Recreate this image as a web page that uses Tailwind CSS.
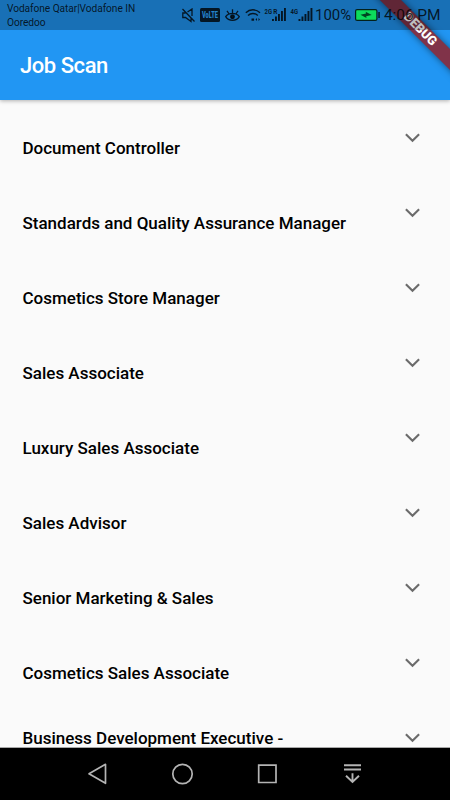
<!DOCTYPE html>
<html lang="en">
<head>
  <meta charset="UTF-8">
  <meta name="viewport" content="width=device-width, initial-scale=1.0">
  <title>Job Scan</title>
  <script src="https://cdn.jsdelivr.net/npm/@tailwindcss/browser@4"></script>
</head>
<body class="bg-[#fafafa] font-['Roboto',sans-serif]">
  <div class="relative flex flex-col w-[450px] h-[800px] overflow-hidden">

    <!-- App bar, the status bar lies over its top part -->
    <header class="relative z-10 shrink-0 h-[100px] pt-[30px] bg-[#2196f3] shadow-[0_1px_4px_rgba(0,0,0,0.3)]">
      <h1 class="h-[70px] pl-5 flex items-center text-[22px] font-medium text-white tracking-[-0.45px]">Job Scan</h1>
    </header>

    <!-- Debug ribbon -->
    <div class="absolute z-20 left-[345px] top-[22px] w-[150px] h-[15px] rotate-45 flex items-center justify-center bg-[#803349] shadow-[0_0_7px_rgba(0,0,0,0.5)] text-[12.75px] leading-none font-black text-white">DEBUG</div>

    <!-- Status bar -->
    <div class="absolute z-30 inset-x-0 top-0 h-[30px] pl-[7px] flex items-start bg-black/25 text-black/80">
      <div class="w-[174px] pt-[2px] text-[10.2px] leading-[13.5px] tracking-[-0.07px] whitespace-nowrap">Vodafone Qatar|Vodafone IN<br>Ooredoo</div>
      <!-- muted -->
      <svg class="mt-2 w-[15px] h-[15px] shrink-0" viewBox="0 0 15 15" fill="none" stroke="currentColor" stroke-width="1.300">
        <path d="M1.500 1l12 12.500M4.500 5H1.800v4.500h2.700l5.500 4V10.500M6.500 4L11 1V8"/>
      </svg>
      <!-- volte -->
      <svg class="mt-2 ml-1 w-[20px] h-[14px] shrink-0" viewBox="0 0 20 14">
        <rect width="20" height="14" rx="1.500" fill="currentColor"/>
        <text x="2" y="10.300" font-size="8.500" font-weight="900" textLength="16" lengthAdjust="spacingAndGlyphs" fill="#2583cc">VoLTE</text>
      </svg>
      <!-- eye -->
      <svg class="mt-2 ml-[5px] w-[15px] h-[15px] shrink-0" viewBox="0 0 15 15" fill="none" stroke="currentColor" stroke-width="1.300">
        <path d="M.7 8.700C3.500 4.200 11.500 4.200 14.300 8.700C11.500 13.500 3.500 13.500.7 8.700zM7.500 5V1.200M3.800 5.500L2 2.800M11.200 5.500L13 2.800"/>
        <circle cx="7.500" cy="8.700" r="1.800" fill="currentColor"/>
      </svg>
      <!-- wifi -->
      <svg class="mt-2 ml-[5px] w-[17px] h-[14px] shrink-0" viewBox="0 0 17 14" fill="none" stroke="currentColor" stroke-width="1.400">
        <path d="M.8 4.700C4.800 .8 11 .8 15 4.700M3 7.500C5.800 4.800 10 4.800 12.800 7.500"/>
        <path d="M6.500 10.500h2.600v2.300H6.500zM12 10v3l-1.500-1.500zM13.500 10v3l1.500-1.500z" fill="currentColor" stroke="none"/>
      </svg>
      <!-- signals -->
      <svg class="mt-2 ml-[2px] w-[23px] h-[14px] shrink-0 overflow-visible" viewBox="0 0 23 14" fill="currentColor">
        <text x="0.500" y="6.300" font-size="8" font-weight="700" textLength="7.500" lengthAdjust="spacingAndGlyphs">2G</text>
        <text x="9.300" y="5.500" font-size="6.500" font-weight="700">R</text>
        <path d="M8 11h1.900v2H8zM11 8.500h1.900V13H11zM14 6h1.900v7H14zM17 3h1.900v10H17zM20 0h1.900v13H20z"/>
      </svg>
      <svg class="mt-2 ml-[3px] w-[24px] h-[14px] shrink-0 overflow-visible" viewBox="0 0 24 14" fill="currentColor">
        <text x="0.500" y="6.300" font-size="8" font-weight="700" textLength="7.500" lengthAdjust="spacingAndGlyphs">4G</text>
        <path d="M8.500 11h1.900v2H8.500zM11.500 8.500h1.900V13h-1.900zM14.500 6h1.900v7h-1.900zM17.500 3h1.900v10h-1.900zM20.500 0h1.900v13h-1.900z"/>
      </svg>
      <div class="w-[41px] pt-[6px] pl-[1px] text-[15px] leading-[18px]">100%</div>
      <!-- battery -->
      <svg class="mt-[9px] w-[26px] h-[12px] shrink-0" viewBox="0 0 26 12">
        <rect x=".6" y=".6" width="21.300" height="10.800" rx="1.500" fill="#0ddc5c" stroke="currentColor" stroke-width="1.200"/>
        <path d="M23.300 3h1.500v6h-1.500z" fill="currentColor"/>
        <path d="M5.500 5.800l5.500-1.300-.3-1.700 6 3.300-5.500 1.100.3 1.800z" fill="#042"/>
      </svg>
      <div class="pt-[6px] pl-[3px] text-[15.500px] leading-[19px] tracking-[-0.1px] whitespace-nowrap">4:06 PM</div>
    </div>

    <!-- Job list -->
    <main class="flex-1 min-h-0 overflow-hidden text-[17px] leading-5 font-medium text-black">
      <div class="flex justify-between h-[75px] pl-[22.5px] pr-[30px] pt-[37.5px]">
        <h2>Document Controller</h2>
        <svg class="-mt-[7.5px] w-[15px] h-[15px]" viewBox="0 0 15 15" fill="none" stroke="#6b6b6b" stroke-width="2.100"><path d="M.9 4.200l6.600 6.600 6.600-6.600"/></svg>
      </div>
      <div class="flex justify-between h-[75px] pl-[22.5px] pr-[30px] pt-[37.5px]">
        <h2>Standards and Quality Assurance Manager</h2>
        <svg class="-mt-[7.5px] w-[15px] h-[15px]" viewBox="0 0 15 15" fill="none" stroke="#6b6b6b" stroke-width="2.100"><path d="M.9 4.200l6.600 6.600 6.600-6.600"/></svg>
      </div>
      <div class="flex justify-between h-[75px] pl-[22.5px] pr-[30px] pt-[37.5px]">
        <h2>Cosmetics Store Manager</h2>
        <svg class="-mt-[7.5px] w-[15px] h-[15px]" viewBox="0 0 15 15" fill="none" stroke="#6b6b6b" stroke-width="2.100"><path d="M.9 4.200l6.600 6.600 6.600-6.600"/></svg>
      </div>
      <div class="flex justify-between h-[75px] pl-[22.5px] pr-[30px] pt-[37.5px]">
        <h2>Sales Associate</h2>
        <svg class="-mt-[7.5px] w-[15px] h-[15px]" viewBox="0 0 15 15" fill="none" stroke="#6b6b6b" stroke-width="2.100"><path d="M.9 4.200l6.600 6.600 6.600-6.600"/></svg>
      </div>
      <div class="flex justify-between h-[75px] pl-[22.5px] pr-[30px] pt-[37.5px]">
        <h2>Luxury Sales Associate</h2>
        <svg class="-mt-[7.5px] w-[15px] h-[15px]" viewBox="0 0 15 15" fill="none" stroke="#6b6b6b" stroke-width="2.100"><path d="M.9 4.200l6.600 6.600 6.600-6.600"/></svg>
      </div>
      <div class="flex justify-between h-[75px] pl-[22.5px] pr-[30px] pt-[37.5px]">
        <h2>Sales Advisor</h2>
        <svg class="-mt-[7.5px] w-[15px] h-[15px]" viewBox="0 0 15 15" fill="none" stroke="#6b6b6b" stroke-width="2.100"><path d="M.9 4.200l6.600 6.600 6.600-6.600"/></svg>
      </div>
      <div class="flex justify-between h-[75px] pl-[22.5px] pr-[30px] pt-[37.5px]">
        <h2>Senior Marketing &amp; Sales</h2>
        <svg class="-mt-[7.5px] w-[15px] h-[15px]" viewBox="0 0 15 15" fill="none" stroke="#6b6b6b" stroke-width="2.100"><path d="M.9 4.200l6.600 6.600 6.600-6.600"/></svg>
      </div>
      <div class="flex justify-between h-[75px] pl-[22.5px] pr-[30px] pt-[37.5px]">
        <h2>Cosmetics Sales Associate</h2>
        <svg class="-mt-[7.5px] w-[15px] h-[15px]" viewBox="0 0 15 15" fill="none" stroke="#6b6b6b" stroke-width="2.100"><path d="M.9 4.200l6.600 6.600 6.600-6.600"/></svg>
      </div>
      <div class="flex justify-between h-[75px] pl-[22.5px] pr-[30px] pt-[27.5px]">
        <h2>Business Development Executive -</h2>
        <svg class="mt-[2.5px] w-[15px] h-[15px]" viewBox="0 0 15 15" fill="none" stroke="#6b6b6b" stroke-width="2.100"><path d="M.9 4.200l6.600 6.600 6.600-6.600"/></svg>
      </div>
    </main>

    <!-- Navigation bar -->
    <nav class="shrink-0 h-[53px] pl-[55px] pr-[55px] flex justify-between items-center bg-black border-t border-[#a8a8a8]">
      <svg class="w-[85px] h-[24px]" viewBox="0 0 85 24" fill="none" stroke="#b4b4b4" stroke-width="1.700" stroke-linejoin="round"><path d="M50.500 2.300v19L34 11.800z"/></svg>
      <svg class="w-[85px] h-[24px]" viewBox="0 0 85 24" fill="none" stroke="#b4b4b4" stroke-width="1.700"><circle cx="42.500" cy="12" r="9.700"/></svg>
      <svg class="w-[85px] h-[24px]" viewBox="0 0 85 24" fill="none" stroke="#b4b4b4" stroke-width="1.700"><path d="M33.700 3.200h17.300v17.300H33.700z"/></svg>
      <svg class="w-[85px] h-[24px]" viewBox="0 0 85 24" fill="none" stroke="#b4b4b4" stroke-width="1.900"><path d="M34 3.300h17M34 7.500h17M42.500 11.200v9M36 13.700l6.500 6.300 6.500-6.300"/></svg>
    </nav>
  </div>
</body>
</html>
